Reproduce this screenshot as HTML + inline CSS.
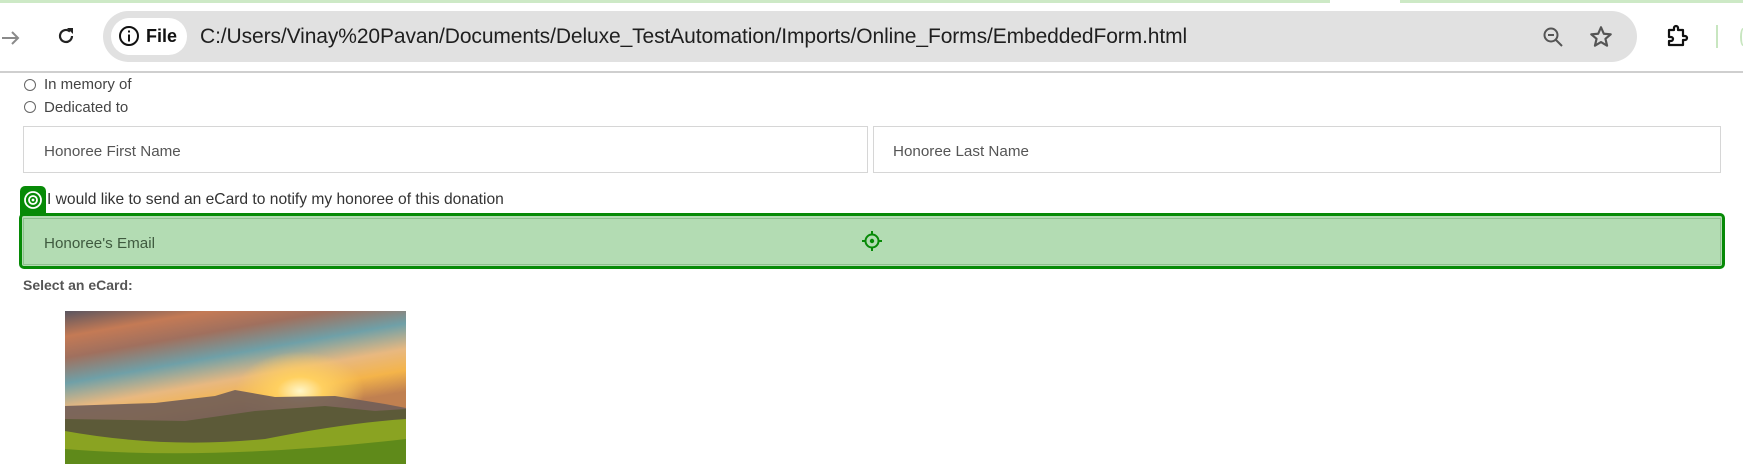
<!DOCTYPE html>
<html><head><meta charset="utf-8"><style>
*{margin:0;padding:0;box-sizing:border-box}
body{width:1743px;height:464px;overflow:hidden;background:#fff;font-family:"Liberation Sans",sans-serif;position:relative;color:#444}
.a{position:absolute}
.pill{left:103px;top:11px;width:1534px;height:51px;background:#e1e1e1;border-radius:26px}
.chip{left:111px;top:18px;width:76px;height:37px;background:#fff;border-radius:19px}
.url{left:200px;top:25px;font-size:21px;color:#1f1f1f;letter-spacing:-0.1px}
.sep{left:0;top:71px;width:1743px;height:2px;background:#cfcfcf}
.lbl{font-size:15px;color:#444}
.radio{width:12px;height:12px;border:1px solid #666;border-radius:50%}
.inp{border:1px solid #d6d6d6;height:47px}
.ph{font-size:15.2px;color:#555}
</style></head><body>
<div class="a" style="left:0;top:0;width:1330px;height:3px;background:#cde9c6"></div>
<div class="a" style="left:1400px;top:0;width:343px;height:3px;background:#cde9c6"></div>
<svg class="a" style="left:0;top:26px" width="24" height="24" viewBox="0 0 24 24"><path d="M2 12h16M12 6l6 6-6 6" fill="none" stroke="#8a8a8a" stroke-width="2"/></svg>
<svg class="a" style="left:54px;top:24px" width="24" height="24" viewBox="0 0 24 24"><path d="M18 12a6 6 0 1 1-2-4.5" fill="none" stroke="#222" stroke-width="2.2"/><path d="M13 4h6v6z" fill="#222"/></svg>
<div class="a pill"></div>
<div class="a chip"></div>
<svg class="a" style="left:118px;top:25px" width="22" height="22" viewBox="0 0 22 22"><circle cx="11" cy="11" r="9" fill="none" stroke="#111" stroke-width="2"/><rect x="10" y="9.5" width="2" height="7" fill="#111"/><rect x="10" y="5.5" width="2" height="2" fill="#111"/></svg>
<div class="a" style="left:146px;top:26px;font-size:18px;font-weight:bold;color:#111">File</div>
<div class="a url">C:/Users/Vinay%20Pavan/Documents/Deluxe_TestAutomation/Imports/Online_Forms/EmbeddedForm.html</div>
<svg class="a" style="left:1540px;top:24px" width="26" height="26" viewBox="0 0 26 26"><circle cx="11" cy="11" r="6.5" fill="none" stroke="#555" stroke-width="2"/><path d="M8 11h6M16 16l6 6" stroke="#555" stroke-width="2"/></svg>
<svg class="a" style="left:1588px;top:24px" width="26" height="26" viewBox="0 0 24 24"><path d="M12 3l2.6 6 6.4.5-4.9 4.2 1.5 6.3L12 16.7 6.4 20l1.5-6.3L3 9.5 9.4 9z" fill="none" stroke="#555" stroke-width="2" stroke-linejoin="round"/></svg>
<svg class="a" style="left:1664px;top:23px" width="28" height="28" viewBox="0 0 28 28"><path d="M5 7h5v-2a2 2 0 0 1 4 0v2h5v6h2a2 2 0 0 1 0 4h-2v5H5v-4h2a2 2 0 0 0 0-4H5z" fill="none" stroke="#111" stroke-width="2.2" stroke-linejoin="round"/></svg>
<div class="a" style="left:1716px;top:25px;width:2px;height:23px;background:#c8e6c0"></div>
<div class="a" style="left:1740px;top:28px;width:6px;height:18px;border:2px solid #c8e6c0;border-radius:50%"></div>
<div class="a sep"></div>

<div class="a radio" style="left:24px;top:79px"></div>
<div class="a lbl" style="left:44px;top:76px">In memory of</div>
<div class="a radio" style="left:24px;top:101px"></div>
<div class="a lbl" style="left:44px;top:99px">Dedicated to</div>

<div class="a inp" style="left:23px;top:126px;width:845px"></div>
<div class="a ph" style="left:44px;top:143px">Honoree First Name</div>
<div class="a inp" style="left:873px;top:126px;width:848px"></div>
<div class="a ph" style="left:893px;top:143px">Honoree Last Name</div>

<div class="a" style="left:20px;top:186px;width:26px;height:30px;background:#078a07;border-radius:5px 5px 0 0"></div>
<svg class="a" style="left:22px;top:189px" width="22" height="22" viewBox="0 0 22 22"><circle cx="11" cy="11" r="8" fill="none" stroke="#fff" stroke-width="1.8"/><circle cx="11" cy="11" r="4" fill="none" stroke="#fff" stroke-width="1.8"/><circle cx="11" cy="11" r="1.4" fill="#fff"/></svg>
<div class="a lbl" style="left:47px;top:191px;color:#333;font-size:15.6px">I would like to send an eCard to notify my honoree of this donation</div>
<div class="a" style="left:19px;top:213px;width:1706px;height:56px;background:#b3dcb3;border:3px solid #078a07;border-radius:5px"></div>
<div class="a" style="left:23px;top:218px;width:1698px;height:47px;border:1px solid #8fbf8f"></div>
<div class="a ph" style="left:44px;top:235px;color:#3f5a3f">Honoree's Email</div>
<svg class="a" style="left:861px;top:230px" width="22" height="22" viewBox="0 0 22 22"><circle cx="11" cy="11" r="6.5" fill="none" stroke="#078a07" stroke-width="2"/><circle cx="11" cy="11" r="2.2" fill="#078a07"/><path d="M11 1v4M11 17v4M1 11h4M17 11h4" stroke="#078a07" stroke-width="2"/></svg>

<div class="a" style="left:23px;top:277px;font-size:14px;font-weight:bold;color:#555">Select an eCard:</div>
<div class="a" style="left:65px;top:311px;width:341px;height:153px;overflow:hidden;background:linear-gradient(170deg,#5a5560 0%,#c47a55 12%,#a0705e 22%,#6fa0a8 34%,#e8b880 46%,#f4b44a 56%,#c08050 66%)">
<div class="a" style="left:170px;top:40px;width:130px;height:80px;background:radial-gradient(ellipse at center,#fff6c8 0%,#ffd060 25%,rgba(255,190,60,0) 70%)"></div>
<svg class="a" style="left:0;top:0" width="341" height="153" viewBox="0 0 341 153"><path d="M0 95 L90 92 L150 85 L170 79 L210 86 L270 85 L320 93 L341 97 L341 153 L0 153z" fill="#705d58" opacity=".9"/><path d="M0 108 L120 110 L190 100 L260 95 L310 100 L341 98 L341 153 L0 153z" fill="#5c5a38"/><path d="M0 120 Q100 138 200 128 Q280 112 341 108 L341 153 L0 153z" fill="#8aa322"/><path d="M0 138 Q150 150 341 128 L341 153 L0 153z" fill="#5f8a1a"/></svg>
</div>
</body></html>
